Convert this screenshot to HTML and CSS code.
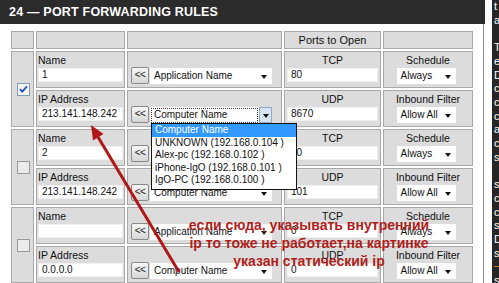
FILE: index.html
```html
<!DOCTYPE html>
<html>
<head>
<meta charset="utf-8">
<link rel="stylesheet" href="styles.css">
</head>
<body>
<div class="screen">
  <div class="main">
    <div class="titlebar">24 — PORT FORWARDING RULES</div>
    <div class="content">
      <table class="rules">
        <tr class="head">
          <td class="w1"></td><td class="w2"></td><td class="w3"></td><td class="w4 c">Ports to Open</td><td class="w5"></td>
        </tr>
        <!-- rule 1 -->
        <tr>
          <td rowspan="2" class="chk">
            <svg width="13" height="13" viewBox="0 0 13 13"><rect x="0.5" y="0.5" width="12" height="12" fill="#f4f4f0" stroke="#7f9db9"/><path d="M3 6.2 L5.2 8.6 L10 3.4" fill="none" stroke="#2150c8" stroke-width="1.8"/></svg>
          </td>
          <td class="f"><div class="lbl">Name</div><div class="inp">1</div></td>
          <td class="p"><div class="pick"><span class="btn">&lt;&lt;</span><div class="sel wide"><span class="st">Application Name</span><i class="dn"></i></div></div></td>
          <td class="f c"><div class="lbl">TCP</div><div class="inp">80</div></td>
          <td class="f c"><div class="lbl">Schedule</div><div class="sel small"><span class="st">Always</span><i class="dn"></i></div></td>
        </tr>
        <tr>
          <td class="f"><div class="lbl">IP Address</div><div class="inp">213.141.148.242</div></td>
          <td class="p drop">
            <div class="pick"><span class="btn">&lt;&lt;</span><div class="sel wide focus"><span class="st">Computer Name</span><span class="ab"><i class="dn"></i></span></div></div>
            <ul class="list">
              <li class="hl">Computer Name</li>
              <li>UNKNOWN (192.168.0.104 )</li>
              <li>Alex-pc (192.168.0.102 )</li>
              <li>iPhone-IgO (192.168.0.101 )</li>
              <li>IgO-PC (192.168.0.100 )</li>
            </ul>
          </td>
          <td class="f c"><div class="lbl">UDP</div><div class="inp">8670</div></td>
          <td class="f c"><div class="lbl">Inbound Filter</div><div class="sel small"><span class="st">Allow All</span><i class="dn"></i></div></td>
        </tr>
        <!-- rule 2 -->
        <tr>
          <td rowspan="2" class="chk">
            <svg width="13" height="13" viewBox="0 0 13 13"><rect x="0.5" y="0.5" width="12" height="12" fill="#ececec" stroke="#9a9a9a"/></svg>
          </td>
          <td class="f"><div class="lbl">Name</div><div class="inp">2</div></td>
          <td class="p"><div class="pick"><span class="btn">&lt;&lt;</span><div class="sel wide"><span class="st">Application Name</span><i class="dn"></i></div></div></td>
          <td class="f c"><div class="lbl">TCP</div><div class="inp">80</div></td>
          <td class="f c"><div class="lbl">Schedule</div><div class="sel small"><span class="st">Always</span><i class="dn"></i></div></td>
        </tr>
        <tr>
          <td class="f"><div class="lbl">IP Address</div><div class="inp">213.141.148.242</div></td>
          <td class="p"><div class="pick"><span class="btn">&lt;&lt;</span><div class="sel wide"><span class="st">Computer Name</span><i class="dn"></i></div></div></td>
          <td class="f c"><div class="lbl">UDP</div><div class="inp">101</div></td>
          <td class="f c"><div class="lbl">Inbound Filter</div><div class="sel small"><span class="st">Allow All</span><i class="dn"></i></div></td>
        </tr>
        <!-- rule 3 -->
        <tr>
          <td rowspan="2" class="chk">
            <svg width="13" height="13" viewBox="0 0 13 13"><rect x="0.5" y="0.5" width="12" height="12" fill="#ececec" stroke="#9a9a9a"/></svg>
          </td>
          <td class="f"><div class="lbl">Name</div><div class="inp"></div></td>
          <td class="p"><div class="pick"><span class="btn">&lt;&lt;</span><div class="sel wide"><span class="st">Application Name</span><i class="dn"></i></div></div></td>
          <td class="f c"><div class="lbl">TCP</div><div class="inp">0</div></td>
          <td class="f c"><div class="lbl">Schedule</div><div class="sel small"><span class="st">Always</span><i class="dn"></i></div></td>
        </tr>
        <tr>
          <td class="f"><div class="lbl">IP Address</div><div class="inp">0.0.0.0</div></td>
          <td class="p"><div class="pick"><span class="btn">&lt;&lt;</span><div class="sel wide"><span class="st">Computer Name</span><i class="dn"></i></div></div></td>
          <td class="f c"><div class="lbl">UDP</div><div class="inp">0</div></td>
          <td class="f c"><div class="lbl">Inbound Filter</div><div class="sel small"><span class="st">Allow All</span><i class="dn"></i></div></td>
        </tr>
      </table>
    </div>
  </div>
  <div class="gap"></div>
  <div class="side">
    <div>t</div><div>a</div><div>&nbsp;</div><div>T</div><div>e</div><div>D</div><div>c</div><div>c</div><div>c</div><div>a</div><div>c</div><div>s</div><div>&nbsp;</div><div>s</div><div>c</div><div>c</div><div>s</div><div>D</div><div>s</div><div class="or">&nbsp;</div><div>s</div>
  </div>

  <svg class="arrow" width="499" height="283" viewBox="0 0 499 283">
    <line x1="179" y1="272" x2="98" y2="137" stroke="#b01818" stroke-width="3"/>
    <polygon points="91,125 103.5,134 93,140.5" fill="#b01818"/>
  </svg>
  <div class="note">если сюда, указывать внутренний<br>ip то тоже не работает,на картинке<br>указан статический ip</div>
</div>
</body>
</html>
```

FILE: styles.css
```css
* { box-sizing: border-box; }
html, body { margin: 0; padding: 0; background: #fff; }
body { width: 499px; height: 283px; overflow: hidden; font-family: "Liberation Sans", Arial, sans-serif; }

.screen { position: relative; display: flex; width: 499px; height: 283px; overflow: hidden; background: #fff; }

.main { width: 485px; display: flex; flex-direction: column; }
.titlebar {
  height: 24px; background: #2b2b2b; color: #fff;
  font: bold 12.5px/24px "Liberation Sans", Arial, sans-serif;
  padding-left: 9px; letter-spacing: 0.2px;
}
.content { flex: 1; padding: 5px 0 0 9px; border-right: 1px solid #8c8c8c; margin-right: 1px; }

.gap { width: 7px; }
.side {
  flex: 1; background: #262626; color: #fff; overflow: hidden;
  font: 11px/13.7px "Liberation Sans", Arial, sans-serif; padding-left: 2px; padding-top: 0;
}
.side .or { background: linear-gradient(#262626 6px, #c07a2a 6px, #c07a2a 7px, #262626 7px); }

.rules {
  border-collapse: separate; border-spacing: 2px; table-layout: fixed;
  width: 466px; background: #fff;
}
.rules td {
  background: #dcdcdc; border: 1px solid #a9a9a9; padding: 0 1px;
  height: 37px; vertical-align: top;
  font-size: 10.5px; color: #111;
}
.rules .head td { height: 18px; vertical-align: middle; font-size: 11px; line-height: 14px; }
.w1 { width: 23px; } .w2 { width: 89px; } .w3 { width: 155px; } .w4 { width: 97px; } .w5 { width: 90px; }
.c { text-align: center; }

.rules td.chk { vertical-align: middle; text-align: center; padding: 0 0 0 2px; }
.chk svg { display: block; margin: 0 auto; }

.rules td.f { padding: 0 1px; }
.rules td.f.c { padding: 0 2px; }
.lbl { height: 15px; line-height: 14px; padding-top: 1px; font-size: 10.5px; }
.inp {
  height: 14px; margin-top: 1px; background: #fff; border: 1px solid #f0f0f0;
  font-size: 10px; line-height: 12px; padding-left: 3px; text-align: left; color: #111;
}

.rules td.p { padding: 15px 0 0 3px; position: relative; }
.pick { display: flex; align-items: flex-start; gap: 1px; }
.btn {
  width: 18px; height: 17px; border: 1px solid #8a8a8a; border-radius: 2px;
  background: linear-gradient(#f7f7f7, #d6d6d6);
  font-size: 10px; line-height: 14px; text-align: center; color: #222; letter-spacing: -0.5px;
}
.sel {
  position: relative; height: 16px; margin-top: 1px; background: #fff;
  font-size: 10px; line-height: 14px; padding: 1px 0 0 4px; text-align: left; color: #111;
}
.sel.wide { width: 122px; }
.sel.small { width: 59px; margin-left: auto; margin-right: auto; position: relative; left: -2px; }
.dn {
  position: absolute; right: 5px; top: 7px; width: 0; height: 0;
  border-left: 3.5px solid transparent; border-right: 3.5px solid transparent; border-top: 4px solid #111;
}
.sel.focus { padding: 1px 0 0 2px; }
.sel.focus .st { display: inline-block; outline: 1px dotted #333; padding: 0 2px; width: 105px; height: 13px; line-height: 12px; }
.sel.focus .ab {
  position: absolute; right: 0; top: 0; width: 13px; height: 16px;
  background: #d9e4f2; border: 1px solid #8fa9cc;
}
.sel.focus .ab .dn { right: 2px; top: 6px; }

.list {
  position: absolute; left: 23px; top: 32px; width: 146px; height: 67px;
  margin: 0; padding: 0; list-style: none; background: #fff; border: 1px solid #111; z-index: 5;
}
.list li { height: 12.5px; line-height: 12.5px; font-size: 10px; padding-left: 3px; color: #111; white-space: nowrap; }
.list li.hl { background: #3399ff; color: #fff; }

.arrow { position: absolute; left: 0; top: 0; z-index: 8; pointer-events: none; }
.note {
  position: absolute; left: 169px; top: 216px; width: 280px; z-index: 9;
  text-align: center; color: #b01e1c;
  font: bold 14px/18px "Liberation Sans", Arial, sans-serif;
}
```
